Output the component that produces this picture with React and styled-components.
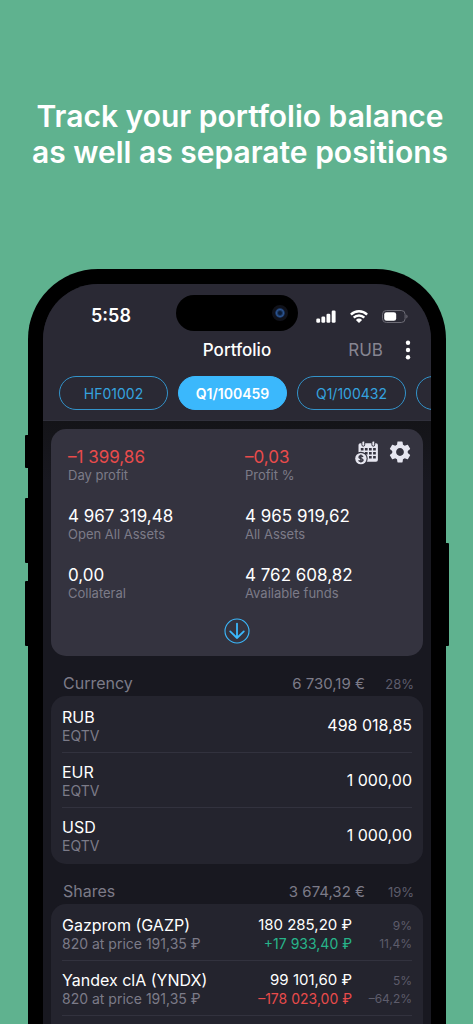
import React, { useState } from 'react'
import styled, { createGlobalStyle } from 'styled-components'
import { MdSettings } from 'react-icons/md'

const accounts = ['HF01002', 'Q1/100459', 'Q1/100432']

const summary = [
    { value: '–1 399,86', label: 'Day profit', tone: 'down' },
    { value: '–0,03', label: 'Profit %', tone: 'down', actions: true },
    { value: '4 967 319,48', label: 'Open All Assets' },
    { value: '4 965 919,62', label: 'All Assets' },
    { value: '0,00', label: 'Collateral' },
    { value: '4 762 608,82', label: 'Available funds' },
]

const currencies = [
    { name: 'RUB', note: 'EQTV', amount: '498 018,85' },
    { name: 'EUR', note: 'EQTV', amount: '1 000,00' },
    { name: 'USD', note: 'EQTV', amount: '1 000,00' },
]

const shares = [
    { name: 'Gazprom (GAZP)', note: '820 at price 191,35 ₽', amount: '180 285,20 ₽', change: '+17 933,40 ₽', tone: 'up', share: '9%', percent: '11,4%' },
    { name: 'Yandex clA (YNDX)', note: '820 at price 191,35 ₽', amount: '99 101,60 ₽', change: '–178 023,00 ₽', tone: 'down', share: '5%', percent: '–64,2%' },
]

const SignalIcon = () => (
    <svg width="20" height="13" viewBox="0 0 20 13" fill="#fff" aria-hidden="true">
        <rect x="0.3" y="8.5" width="3.8" height="4.2" rx="1.3" />
        <rect x="5.4" y="6.5" width="3.8" height="6.2" rx="1.3" />
        <rect x="10.5" y="3.8" width="3.8" height="8.9" rx="1.3" />
        <rect x="15.7" y="0.4" width="3.9" height="12.3" rx="1.3" />
    </svg>
)

const WifiIcon = () => (
    <svg width="18" height="13" viewBox="0 0 18 13" aria-hidden="true">
        <g fill="none" stroke="#fff" strokeWidth="2.4">
            <path d="M0.9 4.6 A11.6 11.6 0 0 1 17.1 4.6" />
            <path d="M3.7 7.7 A7.4 7.4 0 0 1 14.3 7.7" />
        </g>
        <path d="M9 13 L5.9 9.9 A4.4 4.4 0 0 1 12.1 9.9 Z" fill="#fff" />
    </svg>
)

const BatteryIcon = () => (
    <svg width="26" height="13" viewBox="0 0 26 13" aria-hidden="true">
        <rect x="0.5" y="0.5" width="22.6" height="12" rx="3.8" fill="none" stroke="#6c6b75" />
        <rect x="2.2" y="2.2" width="12" height="8.6" rx="2.3" fill="#fff" />
        <path d="M24.3 4.4 Q25.6 5 25.6 6.5 Q25.6 8 24.3 8.6 Z" fill="#6c6b75" />
    </svg>
)

const DotsIcon = () => (
    <svg width="6" height="20" viewBox="0 0 6 20" fill="#fff" aria-hidden="true">
        <circle cx="3" cy="2.7" r="2.2" />
        <circle cx="3" cy="10" r="2.2" />
        <circle cx="3" cy="17.3" r="2.2" />
    </svg>
)

const PayoutCalendarIcon = () => (
    <svg width="24" height="26" viewBox="0 -2 24 26" aria-hidden="true">
        <path d="M5.4 2.2 H21 a1.9 1.9 0 0 1 1.9 1.9 V18.8 a1.9 1.9 0 0 1 -1.9 1.9 H11 L11 12 H3.5 V4.1 a1.9 1.9 0 0 1 1.9 -1.9 Z" fill="#e6e6f0" />
        <g fill="#e6e6f0" stroke="#34333f" strokeWidth="1">
            <rect x="6.9" y="0" width="2.8" height="5.2" rx="1.4" />
            <rect x="16.9" y="0" width="2.8" height="5.2" rx="1.4" />
        </g>
        <g fill="#34333f">
            <rect x="5.8" y="7" width="2.7" height="2.5" />
            <rect x="9.9" y="7" width="2.7" height="2.5" />
            <rect x="14" y="7" width="2.7" height="2.5" />
            <rect x="18.1" y="7" width="2.7" height="2.5" />
            <rect x="9.9" y="11" width="2.7" height="2.5" />
            <rect x="14" y="11" width="2.7" height="2.5" />
            <rect x="18.1" y="11" width="2.7" height="2.5" />
            <rect x="14" y="15" width="2.7" height="2.5" />
            <rect x="18.1" y="15" width="2.7" height="2.5" />
        </g>
        <circle cx="5.9" cy="17.6" r="6.8" fill="#34333f" />
        <circle cx="5.9" cy="17.6" r="5.7" fill="#e6e6f0" />
        <path d="M7.9 16 C7.6 15 6.8 14.8 5.9 14.8 C4.8 14.8 4 15.3 4 16.2 C4 18.1 8 17.1 8 19 C8 19.9 7.1 20.4 5.9 20.4 C4.8 20.4 4 20.1 3.7 19.2 M5.9 13.6 V21.6" fill="none" stroke="#34333f" strokeWidth="1.4" />
    </svg>
)

const ArrowDownIcon = () => (
    <svg width="26" height="26" viewBox="0 0 26 26" fill="none" stroke="#3bb8fc" aria-hidden="true">
        <circle cx="13" cy="13" r="12" strokeWidth="1.1" />
        <path d="M13 5.6 V20 M6.2 13.4 L13 20 L19.8 13.4" strokeWidth="1.8" strokeLinecap="round" strokeLinejoin="round" />
    </svg>
)

const App = () => {
    const [account, setAccount] = useState('Q1/100459')

    return (
        <Page>
            <GlobalStyle />
            <Headline>
                Track your portfolio balance
                <br />
                as well as separate positions
            </Headline>
            <Phone>
                <SideKey $side="left" $top={166} $length={33} />
                <SideKey $side="left" $top={229} $length={65} />
                <SideKey $side="left" $top={312} $length={65} />
                <SideKey $side="right" $top={274} $length={103} />
                <Screen>
                    <TopArea>
                        <StatusBar>
                            <Clock>5:58</Clock>
                            <Island>
                                <Camera />
                            </Island>
                            <StatusIcons>
                                <SignalIcon />
                                <WifiIcon />
                                <BatteryIcon />
                            </StatusIcons>
                        </StatusBar>
                        <NavBar>
                            <Title>Portfolio</Title>
                            <NavActions>
                                <CurrencyButton>RUB</CurrencyButton>
                                <IconButton aria-label="More">
                                    <DotsIcon />
                                </IconButton>
                            </NavActions>
                        </NavBar>
                        <Chips>
                            {accounts.map(name => (
                                <Chip key={name} $active={name === account} onClick={() => setAccount(name)}>
                                    {name}
                                </Chip>
                            ))}
                            <Chip aria-label="Next account" />
                        </Chips>
                    </TopArea>
                    <Content>
                        <SummaryCard>
                            <SummaryGrid>
                                {summary.map(item => (
                                    <SummaryCell key={item.label}>
                                        <div>
                                            <Value $tone={item.tone}>{item.value}</Value>
                                            <Label>{item.label}</Label>
                                        </div>
                                        {item.actions && (
                                            <CardActions>
                                                <IconButton aria-label="Payout calendar">
                                                    <PayoutCalendarIcon />
                                                </IconButton>
                                                <IconButton aria-label="Settings">
                                                    <MdSettings size={26} color="#e6e6f0" />
                                                </IconButton>
                                            </CardActions>
                                        )}
                                    </SummaryCell>
                                ))}
                            </SummaryGrid>
                            <ExpandButton aria-label="Show more">
                                <ArrowDownIcon />
                            </ExpandButton>
                        </SummaryCard>
                        <Section title="Currency" total="6 730,19 €" percent="28%" rows={currencies} />
                        <Section title="Shares" total="3 674,32 €" percent="19%" rows={shares} loading />
                    </Content>
                </Screen>
            </Phone>
        </Page>
    )
}

const Section = ({ title, total, percent, rows, loading }) => (
    <section>
        <SectionHeader>
            <SectionTitle>{title}</SectionTitle>
            <SectionTotal>{total}</SectionTotal>
            <SectionPercent>{percent}</SectionPercent>
        </SectionHeader>
        <List>
            {rows.map(row => (
                <Row key={row.name}>
                    <RowMain>
                        <Name>{row.name}</Name>
                        <Note>{row.note}</Note>
                    </RowMain>
                    <RowAmount>
                        {row.change ? (
                            <>
                                <Amount>{row.amount}</Amount>
                                <Note $tone={row.tone}>{row.change}</Note>
                            </>
                        ) : (
                            <Name>{row.amount}</Name>
                        )}
                    </RowAmount>
                    {row.percent && (
                        <RowPercent>
                            <Percent>{row.share}</Percent>
                            <Percent>{row.percent}</Percent>
                        </RowPercent>
                    )}
                </Row>
            ))}
            {/* blank row until the next positions are loaded */}
            {loading && <Row />}
        </List>
    </section>
)

export default App


const tones = {
    up: '#27b48a',
    down: '#e94b4b',
}

const GlobalStyle = createGlobalStyle`
* {
    box-sizing: border-box;
}
body {
    margin: 0;
    background-color: #5fb28f;
    font-family: Inter, "Liberation Sans", sans-serif;
}
button {
    font-family: inherit;
    cursor: pointer;
}
svg {
    display: block;
}
`

const Page = styled.main`
display: flex;
flex-direction: column;
height: 100vh;
overflow: hidden;
padding: 0 27px 0 28px;
background-color: #5fb28f;
`

const Headline = styled.h1`
flex-shrink: 0;
margin: 98px -24px 99px -18px;
color: #fff;
font-size: 30px;
font-weight: 600;
line-height: 36px;
text-align: center;
`

const Phone = styled.div`
position: relative;
flex-shrink: 0;
padding: 15px 15px 0;
border-radius: 70px 70px 0 0;
background-color: #000;
`

const SideKey = styled.span`
position: absolute;
${props => props.$side}: -3px;
top: ${props => props.$top}px;
width: 4px;
height: ${props => props.$length}px;
border-radius: 1px;
background-color: #000;
`

const Screen = styled.div`
overflow: hidden;
border-radius: 55px 55px 0 0;
background-color: #181820;
`

const TopArea = styled.header`
padding-bottom: 10px;
border-bottom: 1px solid #30303b;
background-color: #2a2934;
`

const StatusBar = styled.div`
position: relative;
display: flex;
align-items: center;
justify-content: space-between;
height: 49px;
padding: 15px 23px 0 48px;
`

const Clock = styled.span`
color: #fff;
font-size: 18px;
font-weight: 600;
line-height: 20px;
`

const Island = styled.div`
position: absolute;
top: 11px;
left: 50%;
display: flex;
align-items: center;
justify-content: flex-end;
width: 122px;
height: 36px;
margin-left: -61px;
padding-right: 10px;
border-radius: 18px;
background-color: #000;
`

const Camera = styled.span`
width: 16px;
height: 16px;
border: 3px solid #10121a;
border-radius: 50%;
background: radial-gradient(circle, #0c1c36 20%, #2b5490 50%, #0e1c38 75%);
`

const StatusIcons = styled.div`
display: flex;
align-items: center;
gap: 14px;
`

const NavBar = styled.div`
display: grid;
grid-template-columns: 1fr auto 1fr;
align-items: center;
height: 34px;
padding: 0 20px;
`

const Title = styled.h2`
grid-column: 2;
margin: 0;
color: #fff;
font-size: 17px;
font-weight: 500;
line-height: 22px;
`

const NavActions = styled.div`
display: flex;
align-items: center;
justify-content: flex-end;
gap: 22px;
`

const IconButton = styled.button`
padding: 0;
border: none;
background: none;
`

const CurrencyButton = styled(IconButton)`
color: #868591;
font-size: 17px;
line-height: 22px;
`

const Chips = styled.nav`
display: flex;
gap: 10px;
margin-top: 9px;
padding-left: 16px;
overflow: hidden;
`

const Chip = styled.button`
flex: 0 0 109px;
height: 34px;
padding: 0;
border: 1px solid ${props => (props.$active ? '#3bb8fc' : '#3393ca')};
border-radius: 17px;
background-color: ${props => (props.$active ? '#3bb8fc' : 'transparent')};
color: ${props => (props.$active ? '#fff' : '#35a2df')};
font-size: 14px;
font-weight: ${props => (props.$active ? 600 : 400)};
`

const Content = styled.div`
padding: 8px 8px 0;
background: linear-gradient(#141418, #181820 60px);
`

const SummaryCard = styled.section`
padding: 17px 1px 12px 17px;
border-radius: 15px;
background-color: #34333f;
`

const SummaryGrid = styled.div`
display: grid;
grid-template-columns: 1fr 1fr;
row-gap: 21px;
`

const SummaryCell = styled.div`
display: flex;
justify-content: space-between;
height: 38px;
`

const Value = styled.div`
color: ${props => tones[props.$tone] || '#fff'};
font-size: 17px;
line-height: 22px;
`

const Label = styled.div`
color: #7c7b88;
font-size: 13px;
line-height: 15px;
`

const CardActions = styled.div`
display: flex;
align-items: center;
gap: 8px;
height: 12px;
padding-right: 9px;
`

const ExpandButton = styled(IconButton)`
display: block;
margin: 16px auto 0;
padding-right: 17px;
`

const SectionHeader = styled.div`
display: flex;
align-items: baseline;
height: 40px;
padding: 16px 9px 0 12px;
color: #7c7b88;
font-size: 16px;
line-height: 22px;
`

const SectionTitle = styled.h3`
flex: 1;
margin: 0;
font-size: 16px;
font-weight: 400;
`

const SectionTotal = styled.span`
font-size: 15px;
`

const SectionPercent = styled.span`
width: 49px;
color: #5d5c6b;
font-size: 13px;
text-align: right;
`

const List = styled.div`
padding: 1px 11px 2px;
border-radius: 15px;
background-color: #24242e;
`

const Row = styled.div`
display: flex;
align-items: center;
height: 55px;
border-top: 1px solid #32323e;

&:first-child {
    border-top-color: transparent;
}
`

const RowMain = styled.div`
flex: 1;
`

const RowAmount = styled.div`
text-align: right;
`

const RowPercent = styled.div`
width: 60px;
padding-top: 4px;
text-align: right;
`

const Name = styled.div`
color: #fff;
font-size: 16px;
line-height: 20px;
`

const Amount = styled(Name)`
font-size: 15px;
`

const Note = styled.div`
color: ${props => tones[props.$tone] || '#7c7b88'};
font-size: 14px;
line-height: 17px;
`

const Percent = styled.div`
color: #5d5c6b;
font-size: 12px;
line-height: 18px;
`
